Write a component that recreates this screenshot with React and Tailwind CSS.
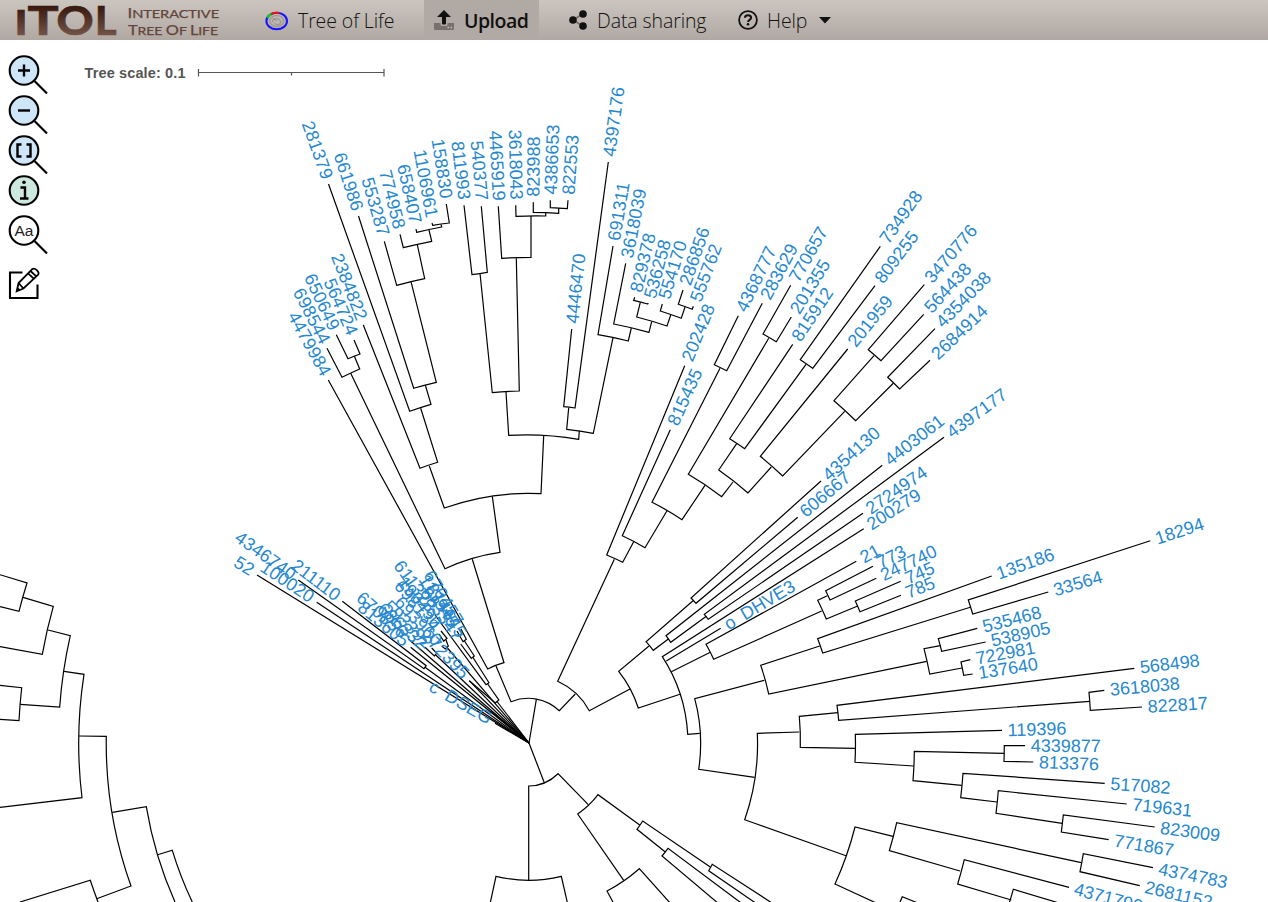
import React from "react";

// Centre of the radial layout; every branch points at it.
const CX = 529;
const CY = 743;

// One entry per clade: outer end of the first child, its corner on the arc,
// the second corner on the arc, outer end of the second child.
const CLADES = [
  // upper left
  [384.3, 241.3, 396.7, 285.3, 424.7, 278.7, 417.3, 244.7],
  [400, 234.3, 403.3, 247.7, 431.7, 241.3, 429, 230],
  [416, 229, 416.7, 232.3, 441.7, 227, 441, 224.3],
  [432, 223, 432.7, 225.3, 449.3, 223, 446.3, 204],
  [358.5, 216, 413.7, 388.3, 436.3, 382.3, 411, 281.7],
  [328.5, 184, 409.7, 411.3, 431, 404.3, 425.3, 385],
  [363.3, 325, 420, 468.3, 437.7, 462.3, 420.7, 408.3],
  [429.3, 466, 444.3, 508, 541, 493.7, 543.7, 435.7],
  [350.7, 373.3, 445, 568.7, 500, 552.3, 492.3, 496.3],
  [336.3, 334.7, 348, 358.7, 360, 354, 354, 340],
  [327, 348.3, 342, 377.3, 359.7, 369, 354.3, 356],
  [328.3, 380, 487.7, 669, 504, 662.7, 472.3, 559.3],
  [496, 666, 511, 701.7, 559.3, 710.7, 575.3, 694],
  [614.3, 559.3, 557.7, 681.3, 589.3, 710.7, 630, 689],
  // top
  [464, 205.3, 472, 274.7, 487.3, 272.3, 481.3, 206.3],
  [498.3, 206.3, 501.7, 258.3, 531, 257.3, 531, 216],
  [515.7, 205.3, 516, 216.3, 545.7, 216, 545.7, 213],
  [533.3, 202.3, 533.3, 212.3, 558.7, 213.3, 558.7, 208],
  [550.3, 200.3, 550.3, 207.7, 567.3, 208.7, 568, 200.3],
  [480, 273.3, 492.3, 392.7, 519.3, 391, 516.3, 258.3],
  [506, 392, 508.7, 435.3, 578.7, 439.3, 579.3, 430.7],
  [571.7, 329, 563.7, 406.7, 575, 408, 608.3, 162],
  [568.7, 407.7, 566.7, 429.3, 593.3, 433.3, 613, 337.7],
  [613, 246, 598, 334.7, 628.3, 341, 631.3, 328],
  [625.7, 263.3, 613.7, 324, 649, 332.3, 651.7, 321.7],
  [640.3, 302.3, 636.7, 317, 667, 326, 670.7, 315],
  [634.7, 297.3, 633.7, 300.3, 647.7, 304, 648.2, 303],
  [662.3, 304, 660.3, 311, 681.3, 318.3, 685, 307],
  [683, 290, 678.3, 304.3, 692.3, 309.3, 693.3, 306.3],
  // upper right
  [684.7, 365.7, 606.7, 555, 622.7, 562.3, 633.7, 541.7],
  [670.3, 429.7, 622.3, 535.7, 645, 547.7, 667, 510.7],
  [738.3, 315.7, 714.3, 364.7, 726.7, 370.7, 762.3, 303.3],
  [720, 368.3, 652, 502.3, 682, 519.7, 705, 485.3],
  [790.7, 285.3, 763, 334, 776.3, 341.7, 791.3, 317],
  [768.7, 338.3, 688.3, 474.3, 721.7, 496.7, 733, 482],
  [792.7, 344.3, 729.7, 438.7, 744.7, 448.7, 806, 364.3],
  [880.3, 246.3, 800.3, 359.7, 812.7, 368.3, 875, 285.7],
  [736.7, 443.7, 718.7, 470, 748, 493, 771.3, 467],
  [847.7, 349, 760.3, 456.3, 782.7, 476, 844.7, 411.3],
  [874, 355.7, 834, 400.7, 855.7, 420.7, 893.3, 383.3],
  [924.3, 284.7, 868.3, 349.7, 881, 360.7, 923.7, 314.3],
  [935, 328.7, 887.7, 377.3, 899.7, 389, 930, 360.3],
  // right
  [821, 481, 691, 598, 696, 603.3, 797.7, 517.3],
  [693, 600.7, 646, 641.7, 653.3, 650.3, 668.7, 638.7],
  [882.3, 465.3, 666, 635.7, 670.7, 642.3, 706.3, 616.3],
  [944, 437.3, 704.3, 614.3, 708.3, 619.3, 863, 513.3],
  [863.7, 528.7, 662.3, 656.7, 687.7, 734.3, 699.7, 733.3],
  [856.3, 561.3, 706, 644.3, 713.7, 659.3, 821.7, 611],
  [873, 566.3, 825.7, 590.7, 830, 600, 876.3, 578.3],
  [900.7, 581.3, 855.3, 601, 860, 611.7, 901, 595.3],
  [827.3, 595.7, 817.7, 600.3, 826.3, 619, 857.7, 606],
  [649, 646, 618.7, 671.3, 638.3, 708, 680, 694.3],
  [764.3, 680.3, 694.7, 698.7, 698.7, 769.3, 754.7, 777.3],
  [819.7, 646, 760.7, 665.3, 768.7, 694, 926.7, 661.3],
  [991.7, 576, 817.7, 638.7, 822.7, 653, 970.3, 607.3],
  [1150.3, 540.7, 968.3, 600, 972.7, 614, 1048.3, 592],
  [940.3, 645.7, 924, 648.7, 929.7, 674, 962, 668],
  [977.3, 628.3, 938.3, 638.7, 941.7, 651.3, 985.7, 642],
  [970.3, 659.7, 961, 662, 963.7, 675.3, 972.7, 674],
  [799.3, 732, 757.3, 733.3, 744.7, 819.7, 846, 855.7],
  [838, 712.7, 799.3, 716.3, 800.3, 747.3, 855.3, 748.3],
  [1134.3, 668.3, 837, 705.3, 838.7, 720.3, 1089.7, 701.3],
  [1104.3, 690.3, 1089, 692.3, 1090.3, 710.3, 1142, 707],
  [1002, 730.3, 855.3, 734.3, 855, 762.3, 913.7, 766],
  [1004, 753.3, 914.3, 751.3, 913, 780.7, 961.7, 785.3],
  [1025, 745.7, 1004.3, 745.7, 1004, 761.3, 1033.3, 762],
  [1104.7, 783.3, 963, 773.3, 960.7, 797.7, 997, 802],
  [1126.7, 804, 998.3, 790.7, 996, 813.3, 1062.3, 823.3],
  [1154.7, 827, 1063.3, 815, 1061.3, 832, 1108.7, 839.7],
  [893, 836.3, 855, 827, 835, 884, 900, 914],
  [1081.3, 862.7, 896.7, 822.7, 889.3, 850.7, 960, 871],
  [1153, 867.7, 1083.3, 853.7, 1080, 871.7, 1139.7, 885.7],
  [1069, 887.3, 964.3, 859.7, 957.7, 884, 1011.3, 900],
  [1090, 912.3, 1013.3, 889.3, 1007, 910, 1050, 925],
  [940, 912, 902.3, 896.7, 897, 909, 920, 920],
  // bottom
  [588.3, 804.7, 558, 773.7, 528.7, 786, 528.7, 880],
  [490, 904, 496, 876.3, 561.3, 876.3, 567.7, 904],
  [639.7, 825, 598, 794.7, 577.7, 814, 623.7, 880.3],
  [671, 904, 639.3, 868.7, 607, 891, 614, 904],
  [710.3, 867, 642.7, 821, 637, 829.3, 665, 851.7],
  [773.5, 904, 712.3, 864.3, 708.7, 870.7, 757, 904],
  [742.5, 904, 668, 848.3, 662, 856, 719, 904],
  // left edge
  [0, 574.7, 27, 583, 19, 611.3, 0, 606.7],
  [23, 597.3, 53.3, 606.3, 42.3, 654.3, 0, 646.7],
  [48, 630, 70.3, 635.7, 59.7, 707, 20.3, 704.3],
  [0, 685.3, 21.7, 687.7, 19, 720.7, 0, 719.3],
  [64, 671.3, 84, 674.3, 82, 797.7, 0, 807.3],
  [79, 736, 106.3, 736.3, 131, 886, 96.7, 898.7],
  [20, 902, 90.3, 880.3, 98, 902, 98, 902],
  [112.3, 812.3, 146.3, 806.7, 175, 902, 175, 902],
  [157.7, 854.7, 172.3, 850.3, 192.3, 902, 192.3, 902],
  // dense group left of the centre
  [298.3, 580, 424, 668.7, 426.2, 665.7, 342.3, 601.3],
  [425, 647.3, 434.3, 656, 436.7, 653.3, 431.7, 648],
  [439, 634, 443.7, 641.2, 447, 638.3, 441, 631],
  [441.7, 646, 445.3, 649, 448.3, 646, 446, 640],
  [457, 631, 463, 641.7, 466.3, 639.3, 461, 629],
  [460.7, 644, 471.3, 658.3, 474.3, 656, 464.5, 641],
  [435, 615, 486, 684.7, 489, 682.7, 473, 657.5],
  [469.3, 680.7, 495.3, 703, 498.8, 700, 487.7, 684],
];

// Single straight branches.
const BRANCHES = [
  [536.3, 699.7, 529, 743],
  [529, 743, 544.3, 782.7],
  [720.7, 628.3, 666.3, 661],
  [710.3, 652.3, 671.3, 671.7],
  [257, 575, 529, 743],
  [316.7, 602.3, 529, 743],
  [425, 667.3, 529, 743],
  [410.7, 647.3, 529, 743],
  [408.3, 639, 529, 743],
  [435.5, 654.7, 529, 743],
  [447, 647.5, 529, 743],
  [469.3, 680.7, 529, 743],
  [495, 723.3, 529, 743],
  [497, 701.5, 529, 743],
  [491, 711, 529, 743],
];

// Leaf labels with the outer end of the branch they belong to.
const LEAVES = [
  ["281379", 328.5, 184], ["661986", 358.5, 216], ["553287", 384.3, 241.3],
  ["774958", 400, 234.3], ["658407", 416, 229], ["1106961", 432, 223],
  ["158830", 446.3, 204], ["811993", 464, 205.3], ["540377", 481.3, 206.3],
  ["4465919", 498.3, 206.3], ["3618043", 515.7, 205.3], ["823988", 533.3, 202.3],
  ["4386653", 550.3, 200.3], ["822553", 568, 200.3], ["4446470", 571.7, 329],
  ["4397176", 608.3, 162], ["691311", 613, 246], ["3618039", 625.7, 263.3],
  ["829378", 634.7, 297.3], ["536258", 648.2, 303.5], ["554170", 662.3, 304],
  ["286856", 683, 290], ["555762", 693.3, 306.3], ["2384822", 363.3, 325],
  ["564724", 354, 340], ["650649", 336.3, 334.7], ["698544", 327, 348.3],
  ["4479984", 328.3, 380], ["202428", 684.7, 365.7], ["815435", 670.3, 429.7],
  ["4368777", 738.3, 315.7], ["283629", 762.3, 303.3], ["770657", 790.7, 285.3],
  ["201355", 791.3, 317], ["815912", 792.7, 344.3], ["734928", 880.3, 246.3],
  ["809255", 875, 285.7], ["201959", 847.7, 349], ["3470776", 924.3, 284.7],
  ["564438", 923.7, 314.3], ["4354038", 935, 328.7], ["2684914", 930, 360.3],
  ["4354130", 821, 481], ["606667", 797.7, 517.3], ["4403061", 882.3, 465.3],
  ["4397177", 944, 437.3], ["2724974", 863, 513.3], ["200279", 863.7, 528.7],
  ["o DHVE3", 720.7, 628.3], ["21", 856.3, 561.3], ["773", 873, 566.3],
  ["247740", 876.3, 578.3], ["745", 900.7, 581.3], ["785", 901, 595.3],
  ["135186", 991.7, 576], ["18294", 1150.3, 540.7], ["33564", 1048.3, 592],
  ["535468", 977.3, 628.3], ["538905", 985.7, 642], ["722981", 970.3, 659.7],
  ["137640", 972.7, 674], ["568498", 1134.3, 668.3], ["3618038", 1104.3, 690.3],
  ["822817", 1142, 707], ["119396", 1002, 730.3], ["4339877", 1025, 745.7],
  ["813376", 1033.3, 762], ["517082", 1104.7, 783.3], ["719631", 1126.7, 804],
  ["823009", 1154.7, 827], ["771867", 1108.7, 839.7], ["4374783", 1153, 867.7],
  ["2681152", 1139.7, 885.7], ["4371790", 1069, 887.3],
  ["52", 257, 575], ["4346740", 298.3, 580], ["100020", 316.7, 602.3],
  ["211110", 342.3, 601.3], ["670856", 408.3, 639], ["813605", 410.7, 647.3],
  ["686332", 428, 651], ["593392", 433, 650], ["272395", 469.3, 680.7],
  ["611323", 435, 615], ["698134", 439, 634], ["190496", 441, 631],
  ["693960", 441.7, 648], ["670457", 461, 629], ["113945", 457, 631],
  ["683347", 460.7, 644], ["814645", 464.5, 641], ["c DSEG", 495, 723.3],
];

function cladePath([ax, ay, bx, by, cx, cy, dx, dy]) {
  const r = Math.hypot(bx - CX, by - CY).toFixed(1);
  const cross = (bx - CX) * (cy - CY) - (by - CY) * (cx - CX);
  return `M${ax} ${ay}L${bx} ${by}A${r} ${r} 0 0 ${cross > 0 ? 1 : 0} ${cx} ${cy}L${dx} ${dy}`;
}

function LeafLabel({ text, x, y }) {
  const flipped = x < CX;
  const angle = (Math.atan2(y - CY, x - CX) * 180) / Math.PI + (flipped ? 180 : 0);
  return (
    <text
      transform={`translate(${x} ${y}) rotate(${angle.toFixed(2)})`}
      x={flipped ? -5.7 : 5.7}
      y={flipped ? 5 : 6}
      textAnchor={flipped ? "end" : "start"}
    >
      {text}
    </text>
  );
}

function Tree() {
  return (
    <svg viewBox="0 40 1268 862" className="block h-[862px] w-[1268px]">
      <g fill="none" stroke="#000" strokeWidth="1.2">
        {CLADES.map((c, i) => (
          <path key={i} d={cladePath(c)} />
        ))}
        {BRANCHES.map(([a, b, c, d], i) => (
          <path key={i} d={`M${a} ${b}L${c} ${d}`} />
        ))}
      </g>
      <g fill="#2688d0" className="font-['Liberation_Sans',Arial,sans-serif] text-[18px] [word-spacing:4px]">
        {LEAVES.map(([text, x, y], i) => (
          <LeafLabel key={i} text={text} x={x} y={y} />
        ))}
      </g>
      <text
        x="84.5"
        y="78"
        fill="#555"
        textLength="101"
        className="font-['Liberation_Sans',Arial,sans-serif] text-[14.5px] font-bold"
      >
        Tree scale: 0.1
      </text>
      <path d="M198.5 72.5H384M198.5 69v7.5M384 69v7.5M291.5 72v3.5" stroke="#555" strokeWidth="1.2" />
    </svg>
  );
}

function Lens({ fill, handle = true, children }) {
  return (
    <svg viewBox="0 0 40 40" className="block size-10" fill="none" stroke="#000" strokeWidth="2.4">
      <circle cx="16" cy="15.5" r="14.3" fill={fill} strokeWidth="2.1" />
      {handle && <path d="M26.5 26 39 38.5" strokeWidth="2.1" />}
      {children}
    </svg>
  );
}

function Toolbar() {
  return (
    <div className="absolute top-[15px] left-2 flex flex-col">
      <Lens fill="#cfe6f8">
        <path d="M10 15.5h12M16 9.5v12" />
      </Lens>
      <Lens fill="#cfe6f8">
        <path d="M10 15.5h12" />
      </Lens>
      <Lens fill="#cfe6f8">
        <path d="M13.5 9.5h-4v12h4M18.5 9.5h4v12h-4" />
      </Lens>
      <Lens fill="#cde8df" handle={false}>
        <path d="M12.5 12.5H17V23M12 23.5h8.5" />
        <circle cx="16" cy="7.3" r="1.8" fill="#000" stroke="none" />
      </Lens>
      <Lens fill="#fff">
        <text
          x="16"
          y="20.5"
          textAnchor="middle"
          fill="#222"
          stroke="none"
          className="font-['Liberation_Sans',Arial,sans-serif] text-[15.5px]"
        >
          Aa
        </text>
      </Lens>
      <svg viewBox="0 0 32 34" className="mt-3 block h-[34px] w-8" fill="none" stroke="#000" strokeWidth="2.1">
        <path d="M14.5 5.500H2v25.500h27.500V17.500" />
        <path d="m8.700 24.300 1.900-8.300L24.200 2.200c2.500-2 8.300 3 5.700 5.700L15.400 21.500zM10.600 16l4.800 5.500M20 6.400l5.800 5.300M22.500 4l5.800 5.300" strokeWidth="1.800" />
        <path d="m8.700 24.300 1-4 3 2.800z" fill="#000" stroke="none" />
      </svg>
    </div>
  );
}

function Logo() {
  return (
    <svg viewBox="0 0 240 40" className="block h-10 w-[240px] shrink-0 overflow-visible">
      <defs>
        <linearGradient id="logo" x1="0" y1="5" x2="0" y2="36" gradientUnits="userSpaceOnUse">
          <stop offset="0" stopColor="#35150c" />
          <stop offset="1" stopColor="#735549" />
        </linearGradient>
      </defs>
      <g fill="url(#logo)" stroke="url(#logo)" strokeWidth="0.6" className="font-[Lato,sans-serif] font-black">
        <text x="14.500" y="35" className="text-[34px]" textLength="13" lengthAdjust="spacingAndGlyphs">I</text>
        <text x="27.500" y="35" className="text-[40px]" textLength="31" lengthAdjust="spacingAndGlyphs">T</text>
        <text x="56.500" y="35" className="text-[40px]" textLength="37" lengthAdjust="spacingAndGlyphs">O</text>
        <text x="95" y="35" className="text-[40px]" textLength="21.500" lengthAdjust="spacingAndGlyphs">L</text>
      </g>
      <g fill="#63453b" stroke="#63453b" strokeWidth="0.250" className="font-[Lato,sans-serif] font-normal">
        <text x="127.500" y="18" className="text-[14px]" textLength="91.500" lengthAdjust="spacingAndGlyphs">
          I<tspan className="text-[12px]">NTERACTIVE</tspan>
        </text>
        <text x="128" y="35" className="text-[14px]" textLength="90" lengthAdjust="spacingAndGlyphs">
          T<tspan className="text-[12px]">REE </tspan>O<tspan className="text-[12px]">F </tspan>L
          <tspan className="text-[12px]">IFE</tspan>
        </text>
      </g>
    </svg>
  );
}

function Header() {
  return (
    <header className="flex h-10 w-full items-stretch bg-linear-to-b from-[#cbc5c0] to-[#b1a8a2] font-['Open_Sans','Noto_Sans',sans-serif] text-[19.500px] font-light tracking-[-0.1px] text-[#111]">
      <Logo />
      <a className="flex w-[184px] items-center pl-[25px]">
        <svg viewBox="0 0 24 22" className="mr-[9px] h-[22px] w-6" fill="none">
          <ellipse cx="11.700" cy="12" rx="10.300" ry="8.300" stroke="#1414ff" strokeWidth="2" />
          <path d="M2.300 8.700A10.300 8.300 0 0 1 6.300 5" stroke="#00e000" strokeWidth="2" />
          <path d="M6.300 5A10.300 8.300 0 0 1 14.500 4" stroke="#f01010" strokeWidth="2" />
          <ellipse cx="11.700" cy="12" rx="7" ry="5.500" stroke="#a09c99" strokeWidth="1.600" />
          <path d="M7.500 13c0-5 8.500-4 8 0s-5 3-6 1M7.500 9.500l4 2" stroke="#8f8b88" />
        </svg>
        <span className="mt-0.5 whitespace-nowrap">Tree of Life</span>
      </a>
      <a className="flex w-[115px] items-center bg-[#b1a9a3] pl-2.5 font-semibold">
        <svg viewBox="0 0 20 20" className="mr-2.5 size-5">
          <path d="M0 13h6.500v1.500q0 1.500 1.500 1.500h4q1.500 0 1.500-1.500V13H20v6q0 1-1 1H1q-1 0-1-1z" fill="#77716d" />
          <path d="M10 0l7 7h-5v6.500q0 1-1 1H9q-1 0-1-1V7H3z" fill="#111" />
          <path d="M13.500 17.500h1.500M16.500 17.500H18" stroke="#c9c3be" strokeWidth="1.300" />
        </svg>
        <span className="mt-0.5 tracking-[-0.5px]">Upload</span>
      </a>
      <a className="flex w-[184px] items-center pl-[30px]">
        <svg viewBox="0 0 18 20" className="mr-2.5 h-5 w-[18px]">
          <path d="M14 4 4 10l10 6" fill="none" stroke="#77716d" strokeWidth="2" />
          <g fill="#111">
            <circle cx="14" cy="4" r="3.800" />
            <circle cx="4" cy="10" r="3.800" />
            <circle cx="14" cy="16" r="3.800" />
          </g>
        </svg>
        <span className="mt-0.5 whitespace-nowrap">Data sharing</span>
      </a>
      <a className="flex items-center pl-[15px]">
        <svg viewBox="0 0 20 20" className="mr-[9px] size-5" fill="none" stroke="#111" strokeWidth="1.800">
          <circle cx="10" cy="10" r="8.900" />
          <path d="M6.900 7.700c.1-2 1.500-2.500 3.200-2.500 1.800 0 3 .9 3 2.500 0 2.100-3 2.200-3 4.300" strokeWidth="2" />
          <circle cx="10" cy="14.300" r="1.300" fill="#111" stroke="none" />
        </svg>
        <span className="mt-0.5 w-[41px]">Help</span>
        <svg viewBox="0 0 12 7" className="ml-[11px] h-[7px] w-3">
          <path d="M0 0h12L6 6.500z" fill="#111" />
        </svg>
      </a>
    </header>
  );
}

export default function App() {
  return (
    <div className="flex h-[902px] w-[1268px] flex-col overflow-hidden bg-white">
      <Header />
      <main className="relative">
        <Tree />
        <Toolbar />
      </main>
    </div>
  );
}
